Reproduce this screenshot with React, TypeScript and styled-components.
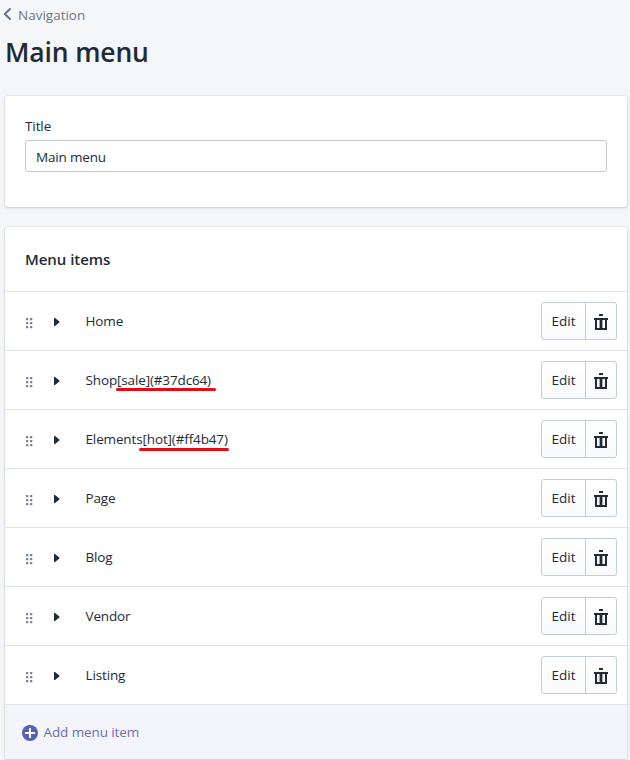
import React from "react";
import styled, { createGlobalStyle } from "styled-components";

const GlobalStyle = createGlobalStyle`
  * { box-sizing: border-box; }
  body {
    margin: 0;
    background: #f4f6f8;
    color: #212b36;
    font-family: "Open Sans", "Noto Sans", sans-serif;
    font-size: 13.5px;
    line-height: 20px;
  }
`;

const Page = styled.main`
  width: 630px;
  height: 760px;
  padding: 5px 3px 0 5px;
  overflow: hidden;
  display: flex;
  flex-direction: column;
`;

const Breadcrumb = styled.nav`
  display: flex;
  align-items: center;
  height: 20px;
  color: #6b7884;
  letter-spacing: 0;

  svg { margin: -2px 7px 0 -2px; }
`;

const Heading = styled.h1`
  margin: 9px 0 0;
  height: 36px;
  font-size: 26.5px;
  font-weight: 600;
  line-height: 36px;
  letter-spacing: -0.15px;
`;

const Card = styled.section<{ $top: number; $height: number }>`
  flex: none;
  height: ${(p) => p.$height}px;
  margin-top: ${(p) => p.$top}px;
  background: #fff;
  border-radius: 3px;
  overflow: hidden;
  box-shadow: 0 0 0 1px rgba(63, 63, 68, 0.06), 0 1px 3px rgba(63, 63, 68, 0.18);
`;

const Field = styled.label`
  display: flex;
  flex-direction: column;
  padding: 20px 20px 0;
  letter-spacing: -0.1px;
`;

const TextInput = styled.input`
  height: 32px;
  margin-top: 4px;
  padding: 2px 10px 0;
  border: 1px solid #c4cacf;
  border-radius: 3px;
  background: #fff;
  color: #212b36;
  font: inherit;
  letter-spacing: -0.18px;
`;

const SectionTitle = styled.h2`
  margin: 0;
  height: 64px;
  padding: 22px 20px 0;
  font-size: 15px;
  font-weight: 600;
  line-height: 20px;
  letter-spacing: -0.05px;
`;

const List = styled.ul`
  margin: 0;
  padding: 0;
  list-style: none;
`;

const Row = styled.li`
  display: flex;
  align-items: center;
  height: 59px;
  padding: 0 10px 0 20px;
  border-top: 1px solid #dfe3e8;
`;

const DragHandle = styled.svg`
  margin: 4px 20px 0 1px;
`;

const Caret = styled.svg`
  margin: 2px 25.5px 0 0;
`;

const Label = styled.span`
  flex: 1;
  letter-spacing: -0.14px;
`;

const Tag = styled.span`
  position: relative;
`;

const Underline = styled.span<{ $left: number; $right: number; $top: number }>`
  position: absolute;
  left: ${(p) => p.$left}px;
  right: ${(p) => p.$right}px;
  top: ${(p) => p.$top}px;
  height: 3px;
  border-radius: 2px;
  background: #df0d16;
`;

const ButtonGroup = styled.div`
  display: flex;
  height: 38px;
  border: 1px solid #c4cdd5;
  border-radius: 3px;
  background: linear-gradient(#fff, #f9fafb);
  overflow: hidden;
`;

const Button = styled.button<{ $width: number }>`
  display: flex;
  align-items: center;
  justify-content: center;
  width: ${(p) => p.$width}px;
  padding: 0;
  border: 0;
  background: transparent;
  color: #212b36;
  font: inherit;

  & + & { border-left: 1px solid #c4cdd5; }
  svg { margin-top: 2px; }
`;

const AddButton = styled.button`
  display: flex;
  align-items: center;
  width: 100%;
  height: 55px;
  padding: 0 17px;
  border: 0;
  border-top: 1px solid #dfe3e8;
  background: #f4f5fa;
  color: #6a70b0;
  font: inherit;
  font-size: 13.5px;
  letter-spacing: -0.1px;

  svg { margin: 1px 5.5px 0 0; }
`;

type Mark = { left: number; right: number; top: number };

type Item = {
  name: string;
  tag?: string;
  mark?: Mark;
};

const items: Item[] = [
  { name: "Home" },
  { name: "Shop", tag: "[sale](#37dc64)", mark: { left: -1, right: -5, top: 17 } },
  { name: "Elements", tag: "[hot](#ff4b47)", mark: { left: -3, right: -1, top: 18 } },
  { name: "Page" },
  { name: "Blog" },
  { name: "Vendor" },
  { name: "Listing" },
];

const TrashIcon = () => (
  <svg width="14" height="16" viewBox="0 0 14 16" fill="#212b36">
    <rect x="5" y="0" width="4" height="2" rx="0.5" />
    <path
      d="M0 4h14v2h-1v10H1V6H0zM3 6v8h2.6V6zM8.4 6v8H11V6z"
      fillRule="evenodd"
    />
  </svg>
);

const MenuRow = ({ item }: { item: Item }) => (
  <Row>
    <DragHandle width="8" height="11" viewBox="0 0 8 11" fill="#77838f">
      {[0, 4, 8].map((y) => (
        <React.Fragment key={y}>
          <rect x="0" y={y} width="2.3" height="2.3" rx="0.5" />
          <rect x="4" y={y} width="2.3" height="2.3" rx="0.5" />
        </React.Fragment>
      ))}
    </DragHandle>
    <Caret width="6" height="8" viewBox="0 0 6 8" fill="#212b36">
      <path d="M0 0h1L5.4 3.6v.8L1 8H0z" />
    </Caret>
    <Label>
      {item.name}
      {item.tag && item.mark && (
        <Tag>
          {item.tag}
          <Underline $left={item.mark.left} $right={item.mark.right} $top={item.mark.top} />
        </Tag>
      )}
    </Label>
    <ButtonGroup>
      <Button $width={43}>Edit</Button>
      <Button $width={31} aria-label={`Delete ${item.name}`}>
        <TrashIcon />
      </Button>
    </ButtonGroup>
  </Row>
);

export default function App() {
  return (
    <>
      <GlobalStyle />
      <Page>
        <Breadcrumb>
          <svg width="8" height="12" viewBox="0 0 8 12" fill="none" stroke="#637381" strokeWidth="1.9">
            <path d="M7 1L1.8 6L7 11" strokeLinecap="round" strokeLinejoin="round" />
          </svg>
          Navigation
        </Breadcrumb>
        <Heading>Main menu</Heading>
        <Card $top={26} $height={111}>
          <Field>
            Title
            <TextInput defaultValue="Main menu" />
          </Field>
        </Card>
        <Card $top={20} $height={532}>
          <SectionTitle>Menu items</SectionTitle>
          <List>
            {items.map((item) => (
              <MenuRow key={item.name} item={item} />
            ))}
          </List>
          <AddButton>
            <svg width="16" height="16" viewBox="0 0 16 16">
              <circle cx="8" cy="8" r="8" fill="#5560b8" />
              <path d="M8 3.8v8.4M3.8 8h8.4" stroke="#fff" strokeWidth="2" strokeLinecap="round" />
            </svg>
            Add menu item
          </AddButton>
        </Card>
      </Page>
    </>
  );
}
